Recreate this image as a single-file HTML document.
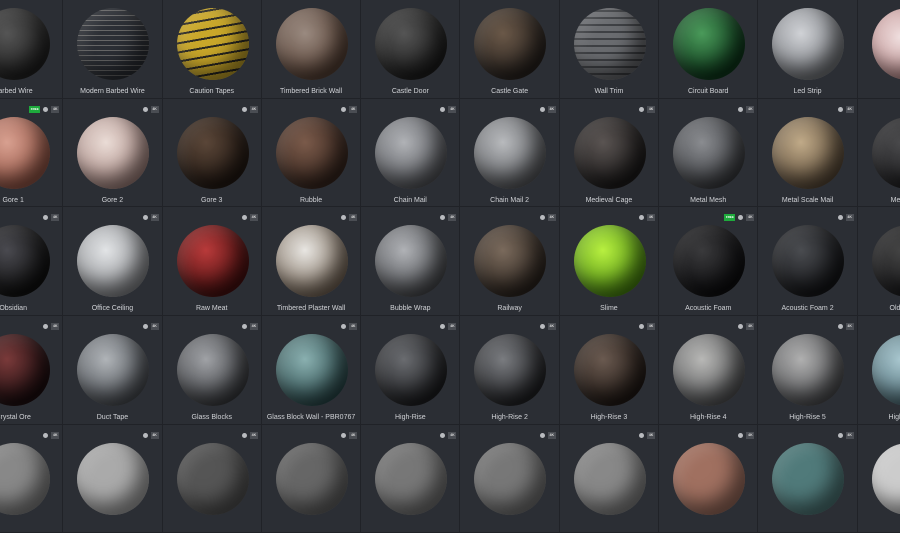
<!DOCTYPE html><html><head><style>
body{margin:0;width:900px;height:450px;overflow:hidden;background:#2b2e34;font-family:"Liberation Sans",sans-serif;position:relative}
.g{position:absolute;left:-36px;top:-10px;display:grid;grid-template-columns:repeat(10,99.3px);grid-auto-rows:108.7px}
.c{position:relative;box-sizing:border-box;border-right:1px solid #202227;border-bottom:1px solid #202227}
.s{position:absolute;left:14px;top:18px;width:72px;height:72px;border-radius:50%;box-shadow:inset -10px -12px 18px rgba(0,0,0,.55),inset 6px 6px 14px rgba(255,255,255,.12)}
.l{position:absolute;left:0;right:0;top:98px;text-align:center;font-size:7px;color:#d0d2d6;white-space:nowrap}
.k{position:absolute;right:3px;top:7px;width:8px;height:7px;background:#4a4d53;color:#ddd;font-size:3.5px;line-height:7px;text-align:center;font-weight:bold}
.i{position:absolute;right:14px;top:8px;width:5px;height:5px;border-radius:50%;background:#b9bbbf}
.f{position:absolute;right:22px;top:7px;width:11px;height:7px;background:#1eaa3c;color:#fff;font-size:3px;line-height:7px;text-align:center;font-weight:bold}
</style></head><body><div class="g">
<div class="c"><div class="s" style="background:radial-gradient(circle at 40% 35%,#555,#222 70%)"></div><div class="l">Barbed Wire</div></div>
<div class="c"><div class="s" style="background:repeating-linear-gradient(0deg,#2c2f35 0 4px,#666 4px 5px)"></div><div class="l">Modern Barbed Wire</div></div>
<div class="c"><div class="s" style="background:repeating-linear-gradient(170deg,#c9a72a 0 7px,#2a2822 7px 9px)"></div><div class="l">Caution Tapes</div></div>
<div class="c"><div class="s" style="background:radial-gradient(circle at 40% 35%,#9a8a80,#5a4438 70%)"></div><div class="l">Timbered Brick Wall</div></div>
<div class="c"><div class="s" style="background:radial-gradient(circle at 40% 35%,#555,#1e1e1e 70%)"></div><div class="l">Castle Door</div></div>
<div class="c"><div class="s" style="background:radial-gradient(circle at 40% 35%,#6a5848,#2a2420 70%)"></div><div class="l">Castle Gate</div></div>
<div class="c"><div class="s" style="background:repeating-linear-gradient(0deg,#6a6c70 0 5px,#3e4044 5px 7px)"></div><div class="l">Wall Trim</div></div>
<div class="c"><div class="s" style="background:radial-gradient(circle at 40% 35%,#4a9a5a,#0e3a1c 70%)"></div><div class="l">Circuit Board</div></div>
<div class="c"><div class="s" style="background:radial-gradient(circle at 40% 35%,#d0d2d6,#7a7d82 70%)"></div><div class="l">Led Strip</div></div>
<div class="c"><div class="s" style="background:radial-gradient(circle at 40% 40%,#f0e0e0,#c09090 70%)"></div><div class="l">Eye</div></div>

<div class="c"><div class="f">FREE</div><div class="i"></div><div class="k">4K</div><div class="s" style="background:radial-gradient(circle at 40% 35%,#d8a090,#9a5a4a 70%)"></div><div class="l">Gore 1</div></div>
<div class="c"><div class="i"></div><div class="k">4K</div><div class="s" style="background:radial-gradient(circle at 40% 35%,#eadcd6,#a88882 75%)"></div><div class="l">Gore 2</div></div>
<div class="c"><div class="i"></div><div class="k">4K</div><div class="s" style="background:radial-gradient(circle at 40% 35%,#5a4638,#241a14 70%)"></div><div class="l">Gore 3</div></div>
<div class="c"><div class="i"></div><div class="k">4K</div><div class="s" style="background:radial-gradient(circle at 40% 35%,#7a5a4a,#3a2820 70%)"></div><div class="l">Rubble</div></div>
<div class="c"><div class="i"></div><div class="k">4K</div><div class="s" style="background:radial-gradient(circle at 40% 35%,#b0b2b6,#55575c 75%)"></div><div class="l">Chain Mail</div></div>
<div class="c"><div class="i"></div><div class="k">4K</div><div class="s" style="background:radial-gradient(circle at 40% 35%,#b8babd,#5a5c60 75%)"></div><div class="l">Chain Mail 2</div></div>
<div class="c"><div class="i"></div><div class="k">4K</div><div class="s" style="background:radial-gradient(circle at 40% 35%,#5a5452,#1e1c1c 70%)"></div><div class="l">Medieval Cage</div></div>
<div class="c"><div class="i"></div><div class="k">4K</div><div class="s" style="background:radial-gradient(circle at 40% 35%,#8a8c90,#3a3c40 75%)"></div><div class="l">Metal Mesh</div></div>
<div class="c"><div class="i"></div><div class="k">4K</div><div class="s" style="background:radial-gradient(circle at 40% 35%,#c0aa88,#5a4a38 75%)"></div><div class="l">Metal Scale Mail</div></div>
<div class="c"><div class="i"></div><div class="k">4K</div><div class="s" style="background:radial-gradient(circle at 40% 35%,#4a4a4c,#1e1e20 70%)"></div><div class="l">Metal Grid</div></div>

<div class="c"><div class="i"></div><div class="k">4K</div><div class="s" style="background:radial-gradient(circle at 40% 35%,#4a4a50,#111 70%)"></div><div class="l">Obsidian</div></div>
<div class="c"><div class="i"></div><div class="k">4K</div><div class="s" style="background:radial-gradient(circle at 40% 35%,#e2e4e6,#8a8c90 75%)"></div><div class="l">Office Ceiling</div></div>
<div class="c"><div class="i"></div><div class="k">4K</div><div class="s" style="background:radial-gradient(circle at 40% 35%,#b83a3a,#4a1010 72%)"></div><div class="l">Raw Meat</div></div>
<div class="c"><div class="i"></div><div class="k">4K</div><div class="s" style="background:radial-gradient(circle at 40% 35%,#e8e6e2,#7a6a5a 75%)"></div><div class="l">Timbered Plaster Wall</div></div>
<div class="c"><div class="i"></div><div class="k">4K</div><div class="s" style="background:radial-gradient(circle at 40% 35%,#b0b2b6,#4a4c50 75%)"></div><div class="l">Bubble Wrap</div></div>
<div class="c"><div class="i"></div><div class="k">4K</div><div class="s" style="background:radial-gradient(circle at 40% 35%,#7a6a5c,#2e2620 72%)"></div><div class="l">Railway</div></div>
<div class="c"><div class="i"></div><div class="k">4K</div><div class="s" style="background:radial-gradient(circle at 40% 35%,#b8f040,#4a8a10 75%)"></div><div class="l">Slime</div></div>
<div class="c"><div class="f">FREE</div><div class="i"></div><div class="k">4K</div><div class="s" style="background:radial-gradient(circle at 40% 35%,#3a3a3c,#0e0e10 70%)"></div><div class="l">Acoustic Foam</div></div>
<div class="c"><div class="i"></div><div class="k">4K</div><div class="s" style="background:radial-gradient(circle at 40% 35%,#4a4c50,#16171a 70%)"></div><div class="l">Acoustic Foam 2</div></div>
<div class="c"><div class="i"></div><div class="k">4K</div><div class="s" style="background:radial-gradient(circle at 40% 35%,#444,#18181a 70%)"></div><div class="l">Old Chains</div></div>

<div class="c"><div class="i"></div><div class="k">4K</div><div class="s" style="background:radial-gradient(circle at 40% 35%,#7a3a3a,#1e0e10 70%)"></div><div class="l">Crystal Ore</div></div>
<div class="c"><div class="i"></div><div class="k">4K</div><div class="s" style="background:radial-gradient(circle at 40% 35%,#b0b4b8,#4a4e54 75%)"></div><div class="l">Duct Tape</div></div>
<div class="c"><div class="i"></div><div class="k">4K</div><div class="s" style="background:radial-gradient(circle at 40% 35%,#a0a2a6,#3a3c40 75%)"></div><div class="l">Glass Blocks</div></div>
<div class="c"><div class="i"></div><div class="k">4K</div><div class="s" style="background:radial-gradient(circle at 40% 35%,#8ab0b0,#2a4a4c 75%)"></div><div class="l">Glass Block Wall - PBR0767</div></div>
<div class="c"><div class="i"></div><div class="k">4K</div><div class="s" style="background:radial-gradient(circle at 40% 35%,#6a6c70,#1e1f22 72%)"></div><div class="l">High-Rise</div></div>
<div class="c"><div class="i"></div><div class="k">4K</div><div class="s" style="background:radial-gradient(circle at 40% 35%,#7a7c80,#222326 72%)"></div><div class="l">High-Rise 2</div></div>
<div class="c"><div class="i"></div><div class="k">4K</div><div class="s" style="background:radial-gradient(circle at 40% 35%,#6a5a50,#221a16 72%)"></div><div class="l">High-Rise 3</div></div>
<div class="c"><div class="i"></div><div class="k">4K</div><div class="s" style="background:radial-gradient(circle at 40% 35%,#b8b8b6,#555658 75%)"></div><div class="l">High-Rise 4</div></div>
<div class="c"><div class="i"></div><div class="k">4K</div><div class="s" style="background:radial-gradient(circle at 40% 35%,#b0b0b0,#4e4f52 75%)"></div><div class="l">High-Rise 5</div></div>
<div class="c"><div class="i"></div><div class="k">4K</div><div class="s" style="background:radial-gradient(circle at 40% 35%,#aac8d0,#4a6a74 75%)"></div><div class="l">High-Rise 6</div></div>

<div class="c"><div class="i"></div><div class="k">4K</div><div class="s" style="background:#888"></div></div>
<div class="c"><div class="i"></div><div class="k">4K</div><div class="s" style="background:#aaa"></div></div>
<div class="c"><div class="i"></div><div class="k">4K</div><div class="s" style="background:#555"></div></div>
<div class="c"><div class="i"></div><div class="k">4K</div><div class="s" style="background:#666"></div></div>
<div class="c"><div class="i"></div><div class="k">4K</div><div class="s" style="background:#777"></div></div>
<div class="c"><div class="i"></div><div class="k">4K</div><div class="s" style="background:#777"></div></div>
<div class="c"><div class="i"></div><div class="k">4K</div><div class="s" style="background:#888"></div></div>
<div class="c"><div class="i"></div><div class="k">4K</div><div class="s" style="background:#a07060"></div></div>
<div class="c"><div class="i"></div><div class="k">4K</div><div class="s" style="background:#507a7a"></div></div>
<div class="c"><div class="i"></div><div class="k">4K</div><div class="s" style="background:#ccc"></div></div>
</div></body></html>
